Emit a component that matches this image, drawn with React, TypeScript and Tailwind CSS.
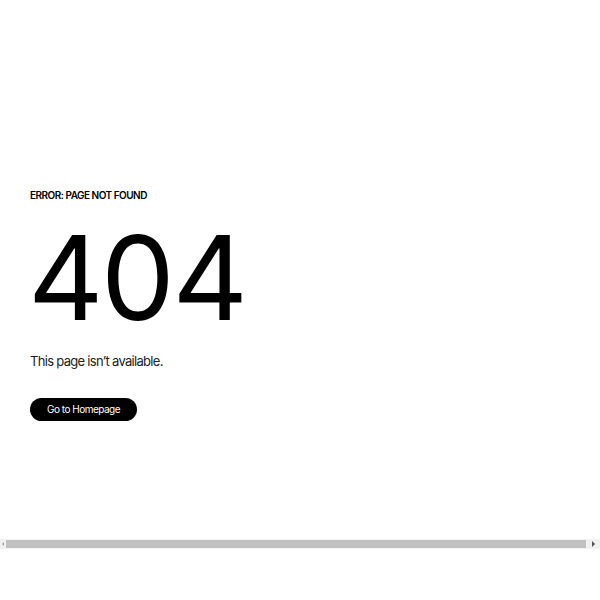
const App = () => {
  return (
    <div className="w-[600px] h-[600px] bg-white" style={{ fontFamily: "Inter, 'Noto Sans', sans-serif" }}>
      <div className="h-[539px] flex flex-col items-start pl-[30px] pt-[188px]">
        {/* heading */}
        <p className="text-[10px] leading-[14px] font-semibold text-black tracking-[-0.5px]">ERROR: PAGE NOT FOUND</p>
        <h1 className="mt-[17px] -ml-[2px] text-[117px] leading-[117px] font-normal text-black tracking-[-2.5px]">404</h1>
        <p className="mt-[15px] text-[13px] leading-[20px] text-[#222] tracking-[-0.7px]">This page isn’t available.</p>
        <a href="#" className="mt-[27px] flex items-center justify-center w-[107px] h-[23px] rounded-full bg-black text-white text-[10px] tracking-[-0.5px]">Go to Homepage</a>
      </div>

      {/* scrollbar */}
      <div className="flex items-center h-[10px] bg-[#f1f1f1]">
        <div className="w-[6px] flex justify-center">
          <span className="w-0 h-0 border-y-[2px] border-y-transparent border-r-[2px] border-r-[#a3a3a3]"></span>
        </div>
        <div className="flex-1 h-[8px] bg-[#c1c1c1]"></div>
        <div className="w-[14px] flex justify-center">
          <span className="w-0 h-0 border-y-[3px] border-y-transparent border-l-[3px] border-l-[#505050]"></span>
        </div>
      </div>
    </div>
  )
}

export default App
